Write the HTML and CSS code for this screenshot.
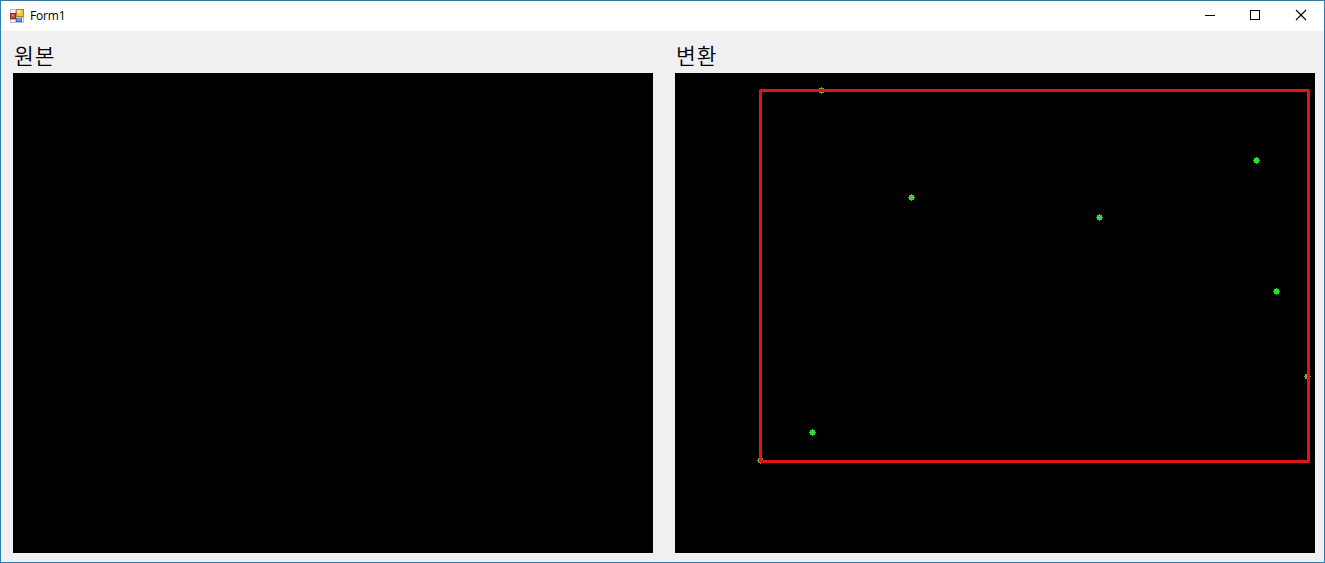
FILE: index.html
```html
<!DOCTYPE html>
<html lang="ko">
<head>
<meta charset="utf-8">
<title>Form1</title>
<link rel="stylesheet" href="styles.css">
</head>
<body>
<div class="window">
  <header class="titlebar">
    <svg class="app-icon" width="14" height="14" viewBox="0 0 14 14" shape-rendering="crispEdges">
      <path d="M0 0H14V14H0Z" fill="#b9bdc4"/>
      <path d="M1 1H5V4H1ZM1 11H5V13H1ZM12 9H13V13H12Z" fill="#fff"/>
      <rect x="6" y="0" width="8" height="8" fill="#a9822c"/>
      <rect x="7" y="1" width="6" height="6" fill="#efc23f"/>
      <rect x="7" y="1" width="4" height="3" fill="#fde48c"/>
      <rect x="0" y="4" width="6" height="6" fill="#8f2420"/>
      <rect x="1" y="5" width="4" height="4" fill="#c9574c"/>
      <rect x="2" y="6" width="1" height="1" fill="#f0b0a8"/>
      <rect x="6" y="9" width="6" height="4" fill="#3d69b4"/>
      <rect x="7" y="9" width="4" height="3" fill="#6f9de0"/>
    </svg>
    <span class="title">Form1</span>
    <div class="controls">
      <svg class="control" viewBox="0 0 45 29"><path d="M18 14.5H28" stroke="#000"/></svg>
      <svg class="control" viewBox="0 0 45 29"><rect x="17.5" y="9.5" width="9" height="9" fill="none" stroke="#000"/></svg>
      <svg class="control" viewBox="0 0 45 29"><path d="M17 9L27 19M27 9L17 19" stroke="#000" stroke-width="1.1"/></svg>
    </div>
  </header>
  <main class="content">
    <section class="panel">
      <h2 class="label">원본</h2>
      <div class="canvas"></div>
    </section>
    <section class="panel">
      <h2 class="label">변환</h2>
      <svg class="canvas" viewBox="0 0 640 480">
        <defs>
          <path id="dot" d="M-2-2H0V-3H1V-2H3V0H4V1H3V3H1V4H0V3H-2V1H-3V0H-2Z"/>
        </defs>
        <g class="points">
          <use href="#dot" x="581" y="87"/>
          <use href="#dot" x="236" y="124"/>
          <use href="#dot" x="424" y="144"/>
          <use href="#dot" x="601" y="218"/>
          <use href="#dot" x="137" y="359"/>
        </g>
        <g class="edge-points">
          <use href="#dot" x="146" y="17"/>
          <use href="#dot" x="632" y="303"/>
          <use href="#dot" x="85" y="387"/>
        </g>
        <rect class="bounds" x="85.5" y="17.5" width="548" height="371"/>
      </svg>
    </section>
  </main>
</div>
</body>
</html>
```
FILE: styles.css
```css
* { box-sizing: border-box; }
body { margin: 0; }
.window {
  width: 1325px;
  height: 563px;
  border: 1px solid #2b7fb5;
  border-top-color: #39799f;
  background: #f0f0f0;
  font-family: "Noto Sans CJK KR", sans-serif;
  color: #000;
  overflow: hidden;
}
.titlebar {
  display: flex;
  align-items: center;
  height: 30px;
  padding-left: 9px;
  background: #fff;
}
.app-icon { flex: none; margin-bottom: 1px; }
.title {
  margin-left: 6px;
  font: 12px/28px "Open Sans", "Noto Sans", sans-serif;
  letter-spacing: -0.2px;
}
.controls {
  display: flex;
  gap: 1px;
  margin-left: auto;
  height: 30px;
}
.control { width: 45px; height: 29px; }
.content {
  display: flex;
  gap: 22px;
  padding: 10px 0 0 12px;
}
.panel { width: 640px; }
.label {
  height: 32px;
  margin: 0;
  padding-left: 1px;
  font-size: 21.5px;
  font-weight: 350;
  line-height: 28px;
  letter-spacing: 1px;
}
.canvas {
  display: block;
  width: 640px;
  height: 480px;
  background: #000;
}
.points { fill: #24e12c; }
.edge-points { fill: #8a9a3a; }
.bounds { fill: none; stroke: #dd1715; stroke-width: 3; stroke-linejoin: round; }
```
